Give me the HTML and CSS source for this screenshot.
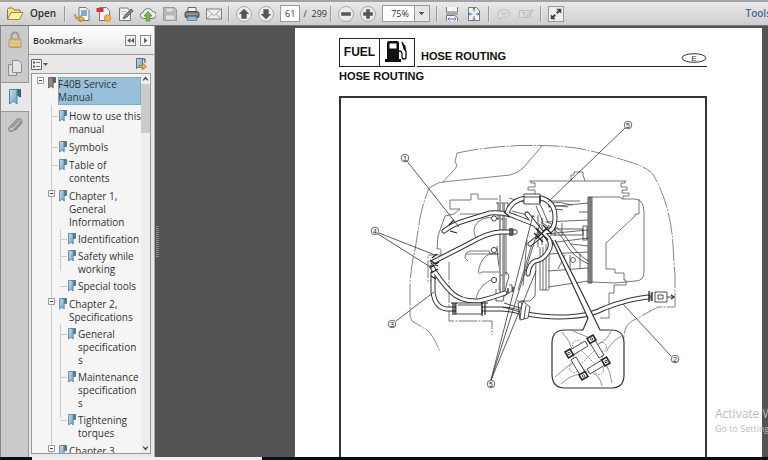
FILE: index.html
```html
<!DOCTYPE html>
<html lang="en">
<head>
<meta charset="utf-8">
<title>F40B Service Manual</title>
<link rel="stylesheet" href="styles.css">
</head>
<body>
<svg class="defs" aria-hidden="true">
  <defs>
    <linearGradient id="blue" x1="0" y1="0" x2="1" y2="1"><stop offset="0" stop-color="#c3dcec"/><stop offset="1" stop-color="#6fa3c6"/></linearGradient>
    <symbol id="mark" viewBox="0 0 9 12">
      <path d="M4 .5h4.500v5H6z" fill="#4f7694" stroke="#4c6a83" stroke-width=".8"/>
      <path d="M1.500.5h4.700v10.500l-2-1.800-2.700 1.800z" fill="url(#blue)" stroke="#587f9c" stroke-width=".8"/>
    </symbol>
    <symbol id="mark-open" viewBox="0 0 9 12">
      <path d="M4 .5h4.500v5H6z" fill="#555" stroke="#555" stroke-width=".8"/>
      <path d="M1.500.5h4.700v10.500l-2-1.800-2.700 1.800z" fill="#8b8b8b" stroke="#5c5c5c" stroke-width=".8"/>
    </symbol>
    <symbol id="minus" viewBox="0 0 7 7"><path d="M.5.5h6v6h-6z" fill="#fff" stroke="#999"/><path d="M2 3.500h3" stroke="#444"/></symbol>
  </defs>
</svg>

<header class="toolbar">
  <button class="open">
    <svg width="18" height="16" viewBox="0 0 18 16"><path d="M1.500 13.500V3.500l1-1.500h4l1.500 2h6v3" fill="#f6e491" stroke="#8f7a35"/><path d="M1.500 13.500 5 6.500h12l-3.500 7z" fill="#fbf0a8" stroke="#a08a40"/></svg>
    Open
  </button>
  <i class="sep sep-wide"></i>
  <button class="tool" aria-label="Export file"><svg viewBox="0 0 16 16"><path d="M5 1.500h7l3 3v10H5z" fill="#f6f6f6" stroke="#777"/><path d="M7 4h6v6H7z" fill="#77afe0"/><path d="M1 8c0 3 2 4 5 4v-2.500L10.500 13 6 16v-2C2 14 .5 11 1 8z" fill="#f2b43c" stroke="#ad6e1b" stroke-width=".7"/></svg></button>
  <button class="tool" aria-label="Create PDF"><svg viewBox="0 0 16 16"><path d="M3.500 1.500h7l3 3v10h-10z" fill="#f4f4f4" stroke="#777"/><path d="M.5 2h7v4h-7z" fill="#d3323a"/><circle cx="11.500" cy="12" r="3.300" fill="#f5b649" stroke="#d28a2e" stroke-width=".8"/></svg></button>
  <button class="tool" aria-label="Edit"><svg viewBox="0 0 16 16"><path d="M1.500 2h8l3 3v9.500h-11z" fill="#f3f3f3" stroke="#777"/><path d="M3.500 5.500h5M3.500 8h4" stroke="#bbb"/><path d="m5 13 1.500-3.500L13 3l2.200 1.800-6.500 6.500z" fill="#75848f" stroke="#4d5961" stroke-width=".8"/></svg></button>
  <button class="tool" aria-label="Upload"><svg viewBox="0 0 16 16"><path d="M3.500 12.500a3 3 0 0 1-.5-6 5 5 0 0 1 9.500-1 3.500 3.500 0 0 1 .5 7z" fill="#ededed" stroke="#777"/><path d="m8 5.500 4 4.500H9.800v5H6.200v-5H4z" fill="#7cbd45" stroke="#4c8a25" stroke-width=".8"/></svg></button>
  <button class="tool" aria-label="Save"><svg viewBox="0 0 16 16"><path d="M1.500 1.500h11l2 2v11h-13z" fill="#bcbcbc" stroke="#999"/><path d="M4 2h7v4H4zM3.500 9h9v5h-9z" fill="#e3e3e3" stroke="#a5a5a5" stroke-width=".7"/></svg></button>
  <button class="tool" aria-label="Print"><svg viewBox="0 0 16 16"><path d="M4 6V1.500h8V6" fill="#f3f3f3" stroke="#666"/><rect x="1" y="5.500" width="14" height="6.500" rx="2" fill="#66717a" stroke="#4b535a"/><path d="M2 8h12" stroke="#aeb8bf"/><path d="M4 10.500h8l1 4H3z" fill="#8bbce3" stroke="#5f7d98" stroke-width=".8"/></svg></button>
  <button class="tool" aria-label="E-mail"><svg viewBox="0 0 16 16"><rect x=".5" y="3" width="15" height="10" fill="#eee" stroke="#808080"/><path d="m1 3.500 7 6 7-6M1 12.500l5-4.500M15 12.500 10 8" fill="none" stroke="#999" stroke-width=".8"/></svg></button>
  <i class="sep"></i>
  <button class="tool round" aria-label="Previous page"><svg viewBox="0 0 16 16"><path d="m8 2 6 6h-3v5.500H5V8H2z" fill="#555"/></svg></button>
  <button class="tool round" aria-label="Next page"><svg viewBox="0 0 16 16"><path d="m8 14 6-6h-3V2.500H5V8H2z" fill="#555"/></svg></button>
  <input class="page-no" type="text" value="61" aria-label="Page number">
  <span class="page-total">/ &nbsp;299</span>
  <i class="sep"></i>
  <button class="tool round" aria-label="Zoom out"><svg viewBox="0 0 16 16"><path d="M2.500 6h11v4h-11z" fill="#555"/></svg></button>
  <button class="tool round" aria-label="Zoom in"><svg viewBox="0 0 16 16"><path d="M6 2.500h4V6h3.500v4H10v3.500H6V10H2.500V6H6z" fill="#555"/></svg></button>
  <select class="zoom" aria-label="Zoom"><option>75%</option></select>
  <i class="sep"></i>
  <button class="tool" aria-label="Fit width"><svg viewBox="0 0 16 16"><path d="M2.500 1v5h11V1M2.500 15v-5.500h8l3 2V15" fill="#f6f6f6" stroke="#777"/><path d="M2 8h12" stroke="#777"/><path d="M4 13h8M5.500 11.500 4 13l1.500 1.500M10.500 11.500 12 13l-1.500 1.500" fill="none" stroke="#5573c0"/></svg></button>
  <button class="tool" aria-label="Fit page"><svg viewBox="0 0 16 16"><path d="M2.500 1.500h8l3 3v10h-11z" fill="#f5f5f5" stroke="#777"/><path d="M8 2v4M8 14v-4M3 8h3.500M13 8H9.500M6.700 3.500 8 2l1.300 1.500M6.700 12.500 8 14l1.300-1.500M4.500 6.700 3 8l1.500 1.300M11.500 6.700 13 8l-1.500 1.300" fill="none" stroke="#5573c0"/></svg></button>
  <i class="sep"></i>
  <button class="tool" aria-label="Comment" disabled><svg viewBox="0 0 16 16"><path d="M3.500 14v-3C0 8.500 2 3.500 8.500 3.500S16 10.500 8.500 11.500c-1 0-2-.2-2.500-.2z" fill="#dedede" stroke="#c0c0c0"/><path d="M5 6.500h7M5 8.500h6" stroke="#c8c8c8"/></svg></button>
  <button class="tool" aria-label="Highlight text" disabled><svg viewBox="0 0 16 16"><path d="M1.500 4.500h11v7h-11z" fill="#dedede" stroke="#c0c0c0"/><path d="M4 6.500h4M6 6.500v4M8 12l1-3 5-6 1.500 1.500-5 6z" fill="#d2d2d2" stroke="#bbb"/></svg></button>
  <i class="sep"></i>
  <button class="tool framed" aria-label="Read mode"><svg viewBox="0 0 16 16"><path d="M8.500 2H14v5.500L12 5.700 9.800 8 8 6.200 10.300 4zM7.500 14H2V8.500l2 1.800L6.200 8 8 9.800 5.700 12z" fill="#444"/></svg></button>
  <a class="tools" href="#tools">Tools</a>
</header>

<div class="workspace">
  <nav class="rail" aria-label="Panels">
    <button aria-label="Security"><svg viewBox="0 0 16 18"><path d="M4.500 8V5a3.500 3.500 0 0 1 7 0v3" fill="none" stroke="#9c9c9c" stroke-width="2"/><rect x="2" y="8" width="12" height="8.500" rx="1" fill="#dcb878" stroke="#b39a6e"/><path d="M2.500 11h11M2.500 13.500h11" stroke="#e8cf9c"/></svg></button>
    <button aria-label="Pages"><svg viewBox="0 0 16 18"><path d="M1.500 5.500h8v11h-8z" fill="#ddd" stroke="#8b8b8b"/><path d="M5.500 1.500h6l3 3v9h-9z" fill="#e4e4e4" stroke="#8b8b8b"/></svg></button>
    <button class="active" aria-label="Bookmarks"><svg viewBox="0 0 16 18"><path d="M7 1.500h6.500V9L10 7z" fill="#3b6688" stroke="#385c78"/><path d="M2.500 1.500h7.500v14.500L6.500 13l-4 3z" fill="url(#blue)" stroke="#5684a5"/></svg></button>
    <button aria-label="Attachments"><svg viewBox="0 0 16 18"><path d="m4.500 11 6-6.500c1.500-1.500 3.500.3 2 2L6 13.500c-2.500 2.500-5.500-.5-3.500-3L9.500 3c3-3 7 .5 4.500 3.700L8 13.500" fill="none" stroke="#909090" stroke-width="1.400"/></svg></button>
  </nav>

  <aside class="panel">
    <div class="panel-head">
      <h1>Bookmarks</h1>
      <button aria-label="Collapse"><svg viewBox="0 0 10 10"><path d="M5 2v6L1.500 5zM9 2v6L5.500 5z" fill="#555"/></svg></button>
      <button aria-label="Expand"><svg viewBox="0 0 10 10"><path d="M3.500 2v6L7 5z" fill="#555"/></svg></button>
    </div>
    <div class="panel-tools">
      <button aria-label="Options"><svg width="17" height="11" viewBox="0 0 17 11"><path d="M.5.500h10v10H.5z" fill="#f4f4f4" stroke="#666"/><path d="M2 3.500h2M2 7.500h2" stroke="#555" stroke-width="2"/><path d="M5 3.500h4M5 7.500h4" stroke="#777"/><path d="M12 4h5l-2.500 3z" fill="#555"/></svg></button>
      <button aria-label="Find current bookmark"><svg width="12" height="12" viewBox="0 0 12 12"><path d="M1.500.5h6v10l-3-2-3 2z" fill="url(#blue)" stroke="#456f90"/><path d="M8 1h2v4" fill="none" stroke="#345"/><path d="M4 7.500h3.500V5l4 3.500-4 3.500V9.500H4z" fill="#f0b040" stroke="#a26d1e" stroke-width=".7"/></svg></button>
    </div>
    <div class="tree-box">
      <ul class="tree">
        <li>
          <div class="row current"><button class="toggle" aria-label="Collapse"><svg><use href="#minus"/></svg></button><svg class="mark"><use href="#mark-open"/></svg><a href="#s0">F40B Service Manual</a></div>
          <ul class="chapters">
            <li><div class="row"><i class="stub"></i><svg class="mark"><use href="#mark"/></svg><a href="#s1">How to use this manual</a></div></li>
            <li><div class="row"><i class="stub"></i><svg class="mark"><use href="#mark"/></svg><a href="#s2">Symbols</a></div></li>
            <li><div class="row"><i class="stub"></i><svg class="mark"><use href="#mark"/></svg><a href="#s3">Table of contents</a></div></li>
            <li><div class="row"><button class="toggle" aria-label="Collapse"><svg><use href="#minus"/></svg></button><svg class="mark"><use href="#mark"/></svg><a href="#s4">Chapter 1, General Information</a></div>
              <ul class="topics">
                <li><div class="row"><i class="stub"></i><svg class="mark"><use href="#mark"/></svg><a href="#s5">Identification</a></div></li>
                <li><div class="row"><i class="stub"></i><svg class="mark"><use href="#mark"/></svg><a href="#s6">Safety while working</a></div></li>
                <li><div class="row"><i class="stub"></i><svg class="mark"><use href="#mark"/></svg><a href="#s7">Special tools</a></div></li>
              </ul>
            </li>
            <li><div class="row"><button class="toggle" aria-label="Collapse"><svg><use href="#minus"/></svg></button><svg class="mark"><use href="#mark"/></svg><a href="#s8">Chapter 2, Specifications</a></div>
              <ul class="topics">
                <li><div class="row"><i class="stub"></i><svg class="mark"><use href="#mark"/></svg><a href="#s9">General specifications</a></div></li>
                <li><div class="row"><i class="stub"></i><svg class="mark"><use href="#mark"/></svg><a href="#s10">Maintenance specifications</a></div></li>
                <li><div class="row"><i class="stub"></i><svg class="mark"><use href="#mark"/></svg><a href="#s11">Tightening torques</a></div></li>
              </ul>
            </li>
            <li><div class="row"><button class="toggle" aria-label="Collapse"><svg><use href="#minus"/></svg></button><svg class="mark"><use href="#mark"/></svg><a href="#s12">Chapter 3</a></div></li>
          </ul>
        </li>
      </ul>
      <div class="scroll">
        <svg viewBox="0 0 10 10"><path d="m2.500 6.500 2.500-3 2.500 3" fill="none" stroke="#444" stroke-width="1.500"/></svg>
        <i class="thumb"></i>
        <svg viewBox="0 0 10 10"><path d="m2.500 3.500 2.500 3 2.500-3" fill="none" stroke="#444" stroke-width="1.500"/></svg>
      </div>
    </div>
  </aside>

  <main class="viewer">
    <i class="grip"></i>
    <article class="page">
      <header class="page-head">
        <div class="fuel"><b>FUEL</b>
          <svg width="34" height="26" viewBox="0 0 34 26"><path d="M7 4q0-2 2-2h8q2 0 2 2v16h2v3H5v-3h2z" fill="#111"/><path d="M9.500 4.500h7v5h-7z" fill="#fff"/><path d="M19 12q3 0 3 3v3q0 2 2 2t2-2v-5L22 3" fill="none" stroke="#111" stroke-width="1.300"/><path d="m22 3 3.500 4 .8 6-3-3z" fill="#111"/></svg>
        </div>
        <div class="rule"><h2>HOSE ROUTING</h2>
          <svg width="26" height="10" viewBox="0 0 26 10"><ellipse cx="13" cy="5" rx="12" ry="4.300" fill="none" stroke="#333"/><text class="letter" x="13" y="8" text-anchor="middle">E</text></svg>
        </div>
      </header>
      <h3>HOSE ROUTING</h3>
      <figure>
        <svg class="diagram" viewBox="341 98 364 362" fill="none" stroke="#444" stroke-width=".8">
          <!-- cowling outline -->
          <g stroke="#666" stroke-dasharray="22 1.500 2 1.500">
            <path d="M457 153Q485 147 520 145.500H542Q570 146 589 150.500T630 162T655 178Q662 190 667 208T673 245T675 275V307H658L632 321Q624 326 624 338"/>
            <path d="M438 183 429 188Q423 203 420 218L415 250Q411 265 410 285V316L412 321 427 330Q434 336 440 352"/>
          </g>
          <path d="M457 153 455 162Q459 166 453 171L443 182M438 183 443 182 510 175Q518 173 523 168L542 146" stroke="#666"/>
          <!-- bracket and head -->
          <g stroke="#555">
            <path d="M450 209V200H471V194H478V199H498M450 209H460M460 209 454 214 445 216 438 236 437 249H441"/>
            <path d="M529 181H626M571 181V175H574V172H583V175L585 181M531 181V183H535V187H528V190H535V194M625 181V183H621V187H627V190H622V193H629V196H623V199"/>
            <path d="M441 250V255H428V281H434M449 262V321H492V335" stroke-dasharray="18 1.500 2 1.500"/>
            <path d="M500 219Q485 215 478 222T476 238M496 253Q484 253 480 265T482 272H500M497 278Q480 282 476 298M497 254H490L489 251H471Q465 251 465 258L468 261M466 254H500M460 214H500"/>
          </g>
          <!-- crankcase plate -->
          <path d="M496 203H508V213H504V296M500 205V293M498 203V219M503 203V297M497 219H504M497 246 498 259 500 272 499 290M506 218V275M504 296 512 291V285H509M501 276 506 272Q511 275 507 282L503 301H496V289" stroke="#333"/>
          <path d="M500 203V295M504 203V295" stroke="#999" stroke-width="2"/>
          <path d="M500 195V202M509 198 530 204M512 211 535 217M545 201H580M548 207 588 203M545 222 588 220M545 234 588 230M549 243 588 238M548 254 588 252M548 271 588 268M548 287 588 281M548 206Q558 205 568 207M549 203Q560 201 572 205M555 223V236M562 223V236M570 255V271M565 255 558 269M580 254V269M588 212H579M588 246 571 244"/>
          <path d="M540 247V290M543 247V290M546 244V290M549 244V289M540 290H549M540 260H536L535 296 530 301H517M527 240 523 286M532 244 518 290" stroke="#444"/>
          <circle cx="573" cy="260" r="2.500"/>
          <!-- flywheel cover -->
          <path d="M588 197H592V283H588zM590 197V283" fill="#aaa" stroke="#333"/>
          <path d="M592 197H620L622 199H634Q644 199 644 212V272Q644 281 635 281L615 283 592 282M639 199V214H635V216L606 243V269H615V273H624V280H626V285H614V293H609V318H600" stroke="#555"/>
          <!-- wiring between the blocks -->
          <g stroke="#333">
            <path d="M550 229H583V235H550M583 226H587V240H583zM547 222Q560 227 568 240T588 261M548 225Q560 232 566 244T588 264M551 241Q560 253 563 259M549 212Q553 208 563 210M536 206 543 222M540 204 548 222"/>
            <path d="M541 222 553 230M538 215V247M542 218V245"/>
          </g>
          <!-- hoses: dark casing with a white core -->
          <g stroke-linecap="round" stroke-linejoin="round">
            <g stroke="#333" stroke-width="5">
              <path id="h1" d="M444 231Q453 224 467 220L490 213Q505 212 516 217L534 224"/>
              <path id="h4" d="M433 262 470 243Q487 233 500 232H514"/>
              <path id="h4b" d="M432 267Q441 282 451 292T479 301Q492 298 505 293"/>
              <path id="h3" d="M433 273V292Q435 308 447 309H457"/>
              <path id="h2" d="M482 309H500Q512 309 522 313C550 319 585 319 605 308Q628 299 648 297"/>
              <path id="h5" d="M507 213Q511 200 526 198H541Q555 202 555 217T545 232L530 244"/>
              <path id="h6" d="M527 214 541 232Q554 240 549 250T535 261Q529 264 528 274"/>
            </g>
            <g stroke="#fff" stroke-width="3">
              <use href="#h1"/><use href="#h4"/><use href="#h4b"/><use href="#h3"/><use href="#h2"/><use href="#h5"/><use href="#h6"/>
            </g>
          </g>
          <g fill="#fff" stroke="#222">
            <path d="M456 303H482V314H456zM458 305H481"/>
            <path d="M453 303V315M455 303V315M482 302V316M485 303V315M451 303H457M481 303H488" stroke-width="1.200"/>
            <path d="M524 194H540V204H524zM524 197H540"/>
            <path d="M518 303 523 301 530 307 528 318 520 320zM522 302 520 319M526 305 524 319M504 303 520 308M503 307 520 312"/>
            <path d="M655 292H667V302H655zM658 295H663V299H658zM651 293V301M667 297H674"/>
            <circle cx="494" cy="218.500" r="2.600"/><circle cx="494" cy="250" r="2.600"/><circle cx="494" cy="280" r="2.600"/><circle cx="515" cy="232" r="2.300"/>
          </g>
          <path d="M649 291V302M652 292V301M510 228V236M512 228V236M536 228 548 240M548 227 536 239M534 233 543 242M543 225 552 234M430 260 438 266M431 273 438 269M430 268 439 262M431 276 436 279M432 258 437 254M449 225 454 220M450 231 457 233M508 288V293M513 287V292M671 295 674 297 671 299M504 212 510 217M540 196V203" stroke="#222" stroke-width="1.300"/>
          <!-- enlarged detail -->
          <path d="M552 240 588 318 583 330H565Q552 330 552 343V374Q552 388 565 388H611Q624 388 624 375V343Q624 330 611 330H600L585 299 555 240" fill="#fff" stroke="#333" stroke-width="1.200"/>
          <path d="M562 332Q570 341 572 349M573 331 590 338M611 331Q608 340 598 344M621 336Q611 342 606 352M555 377 573 362M561 384Q570 375 581 374M593 373Q600 376 602 386M605 362Q611 373 612 383" stroke="#777"/>
          <g stroke-dasharray="2 1" stroke="#777"><circle cx="577" cy="345" r="4.500"/><circle cx="602" cy="347" r="4.500"/><circle cx="574" cy="368" r="4.500"/><circle cx="599" cy="370" r="4.500"/><path d="M588 341 603 357 588 373 573 357zM580 349 596 365M596 349 580 365"/></g>
          <g id="clamps" stroke="#222" fill="#fff">
            <g id="clamp"><path d="m570 350 15-9 3 5-15 9z"/><path d="m565 352 5-3 3.500 6-5 3z" stroke-width="1.500"/><circle cx="569" cy="353.500" r="1.200"/></g>
            <use href="#clamp" transform="rotate(90 587.500 357.500)"/><use href="#clamp" transform="rotate(180 587.500 357.500)"/><use href="#clamp" transform="rotate(270 587.500 357.500)"/>
          </g>
          <!-- callout leaders -->
          <path d="M407 161 459 227M379 233 435 255M378 234 432 268M396 321 434 292M671 356 623 304M625 128 548 202M491 380 533 215M491 380 540 224M491 380 536 271" stroke="#333"/>
          <g fill="#fff" stroke="#444"><circle cx="405" cy="158" r="3.800"/><circle cx="375" cy="231" r="3.800"/><circle cx="392" cy="324" r="3.800"/><circle cx="675" cy="359" r="3.800"/><circle cx="628" cy="125" r="3.800"/><circle cx="491" cy="384" r="3.800"/></g>
          <g class="numbers" text-anchor="middle"><text x="405" y="160.500">1</text><text x="375" y="233.500">4</text><text x="392" y="326.500">3</text><text x="675" y="361.500">2</text><text x="628" y="127.500">5</text><text x="491" y="386.500">5</text></g>
        </svg>
      </figure>
    </article>
    <div class="activate"><p>Activate Windows</p><p>Go to Settings to activate Windows.</p></div>
  </main>
</div>
<footer class="taskbar"><i></i></footer>
</body>
</html>
```
FILE: styles.css
```css
* { box-sizing: border-box; margin: 0; padding: 0; }
html, body { height: 100%; }
body {
  display: grid;
  grid-template-rows: auto minmax(0, 1fr) 3px;
  overflow: hidden;
  background: #545454;
  color: #333;
  font: 10px/13px "Open Sans", "Noto Sans", sans-serif;
}
.defs { position: absolute; width: 0; height: 0; }
button { background: none; border: 0; color: inherit; font: inherit; }
a { color: inherit; text-decoration: none; }
svg { display: block; }

/* toolbar */
.toolbar {
  display: flex;
  align-items: center;
  gap: 6px;
  height: 26px;
  padding-left: 6px;
  border-top: 2px solid #a3a3a3;
  border-bottom: 1px solid #777;
  background: linear-gradient(#e9e9e9, #cecece);
  overflow: hidden;
}
.open { display: flex; align-items: center; gap: 6px; font-weight: 600; }
.open svg { flex: none; }
.sep { flex: none; width: 2px; height: 16px; border-left: 1px solid #999; border-right: 1px solid #e6e6e6; }
.sep-wide { margin: 0 2px; }
.tool { flex: none; width: 16px; height: 16px; }
.tool svg { width: 100%; height: 100%; }
.round { border: 1px solid #aaa; border-radius: 50%; background: #ececec; }
.framed { border: 1px solid #999; background: #eee; }
.page-no, .zoom { height: 17px; border: 1px solid #999; background: #fff; color: #333; font: 9px/15px "Open Sans", sans-serif; }
.page-no { flex: none; width: 20px; text-align: center; }
.page-total { display: flex; flex: none; justify-content: center; width: 18px; white-space: nowrap; font-size: 9px; }
.zoom {
  flex: none;
  width: 48px;
  padding-left: 8px;
  appearance: none;
  border-radius: 0;
  background:
    conic-gradient(from 315deg at 50% 100%, #555 90deg, transparent 0) right 5px top 6px / 6px 3px no-repeat,
    linear-gradient(90deg, #999 1px, #e6e6e6 1px) right / 15px 100% no-repeat,
    #fff;
}
.tools { margin-left: auto; margin-right: -3px; color: #44688f; font-weight: 600; }

/* panel rail */
.workspace { display: grid; grid-template-columns: 29px 126px minmax(0, 1fr); min-height: 0; }
.rail { display: flex; flex-direction: column; background: #cacaca; border-left: 1px solid #888; border-right: 1px solid #999; }
.rail button { display: grid; place-items: center; height: 28px; }
.rail svg { width: 16px; height: 18px; }
.rail .active { height: 30px; margin-right: -1px; background: #e8e8e8; border: solid #999; border-width: 1px 0; }

/* bookmarks */
.panel { display: flex; flex-direction: column; min-height: 0; padding-bottom: 3px; background: #e8e8e8; border-right: 1px solid #aaa; }
.panel-head { display: flex; align-items: center; gap: 4px; height: 29px; padding: 0 3px 0 4px; border-bottom: 1px solid #999; background: linear-gradient(#fff, #e6e6e6); }
.panel-head h1 { flex: 1; font-size: 9px; font-weight: 600; }
.panel-head button { width: 11px; height: 11px; border: 1px solid #888; background: #f4f4f4; }
.panel-tools { display: flex; justify-content: space-between; align-items: center; height: 18px; padding: 0 7px 0 2px; }
.tree-box { display: flex; flex: 1; min-height: 0; margin: 0 3px 0 2px; border: 1px solid #999; background: #f5f5f5; }
.tree { flex: 1; min-width: 0; padding: 3px 0 0 5px; overflow: hidden; }
ul { list-style: none; }
.row { display: flex; align-items: flex-start; }
.row a { flex: 1; min-width: 0; overflow-wrap: anywhere; }
.current a { padding: 1px 0; background: #99c0da; outline: 1px dotted #7894a5; outline-offset: -1px; }
.toggle, .stub { flex: none; width: 7px; height: 7px; margin-right: 3px; }
.toggle svg { width: 7px; height: 7px; }
.stub { width: 7px; margin-left: 3px; margin-right: 0; border-bottom: 1px solid #ccc; }
.mark { flex: none; width: 9px; height: 12px; margin-right: 2px; }
.chapters { margin-left: 11px; background: linear-gradient(#ccc, #ccc) 3px 0 / 1px 100% no-repeat; }
.chapters > li { padding-top: 5px; }
.topics { margin-left: 9px; background: linear-gradient(#ccc, #ccc) 3px 0 / 1px calc(100% - 22px) no-repeat; }
.topics > li { padding-top: 4px; }
.scroll { display: flex; flex-direction: column; width: 9px; background: #eee; }
.scroll svg { width: 9px; height: 10px; }
.thumb { height: 49px; margin-bottom: auto; background: #cbcbcb; }

/* document */
.viewer { position: relative; display: flex; padding: 2px 6px 0 140px; overflow: hidden; background: #545454; }
.grip { position: absolute; left: 1px; top: 50%; width: 3px; height: 32px; margin-top: -16px; background: repeating-linear-gradient(#888 0 1px, #555 1px 2px); }
.page { flex: 1; min-width: 0; padding: 10px 55px 0 44px; background: #fff; color: #111; font-family: "Liberation Sans", sans-serif; }
.page-head { display: flex; gap: 2px; height: 29px; }
.fuel { display: flex; flex: none; width: 76px; border: 1px solid #222; }
.fuel b { flex: 1; border-right: 1px solid #222; font-size: 12px; line-height: 26px; text-align: center; }
.rule { display: flex; flex: 1; justify-content: space-between; align-items: flex-end; padding: 0 0 3px 4px; border-bottom: 1px solid #222; }
h2, h3 { font-size: 11px; line-height: 14px; font-weight: 700; }
h3 { margin-top: 2px; }
.letter { fill: #333; font-size: 8px; }
figure { margin-top: 13px; border: 2px solid #333; border-bottom: 0; }
.diagram { width: 100%; height: auto; }
.numbers { fill: #222; stroke: none; font-size: 7px; }
.activate { position: absolute; left: 560px; bottom: 22px; color: #bcbcbc; white-space: nowrap; }
.activate p { font-size: 9px; line-height: 13px; }
.activate p:first-child { font-size: 12px; line-height: 17px; }

.taskbar { display: flex; padding-left: 32px; background: #0a0e18; }
.taskbar i { width: 230px; background: #eee; }
```
